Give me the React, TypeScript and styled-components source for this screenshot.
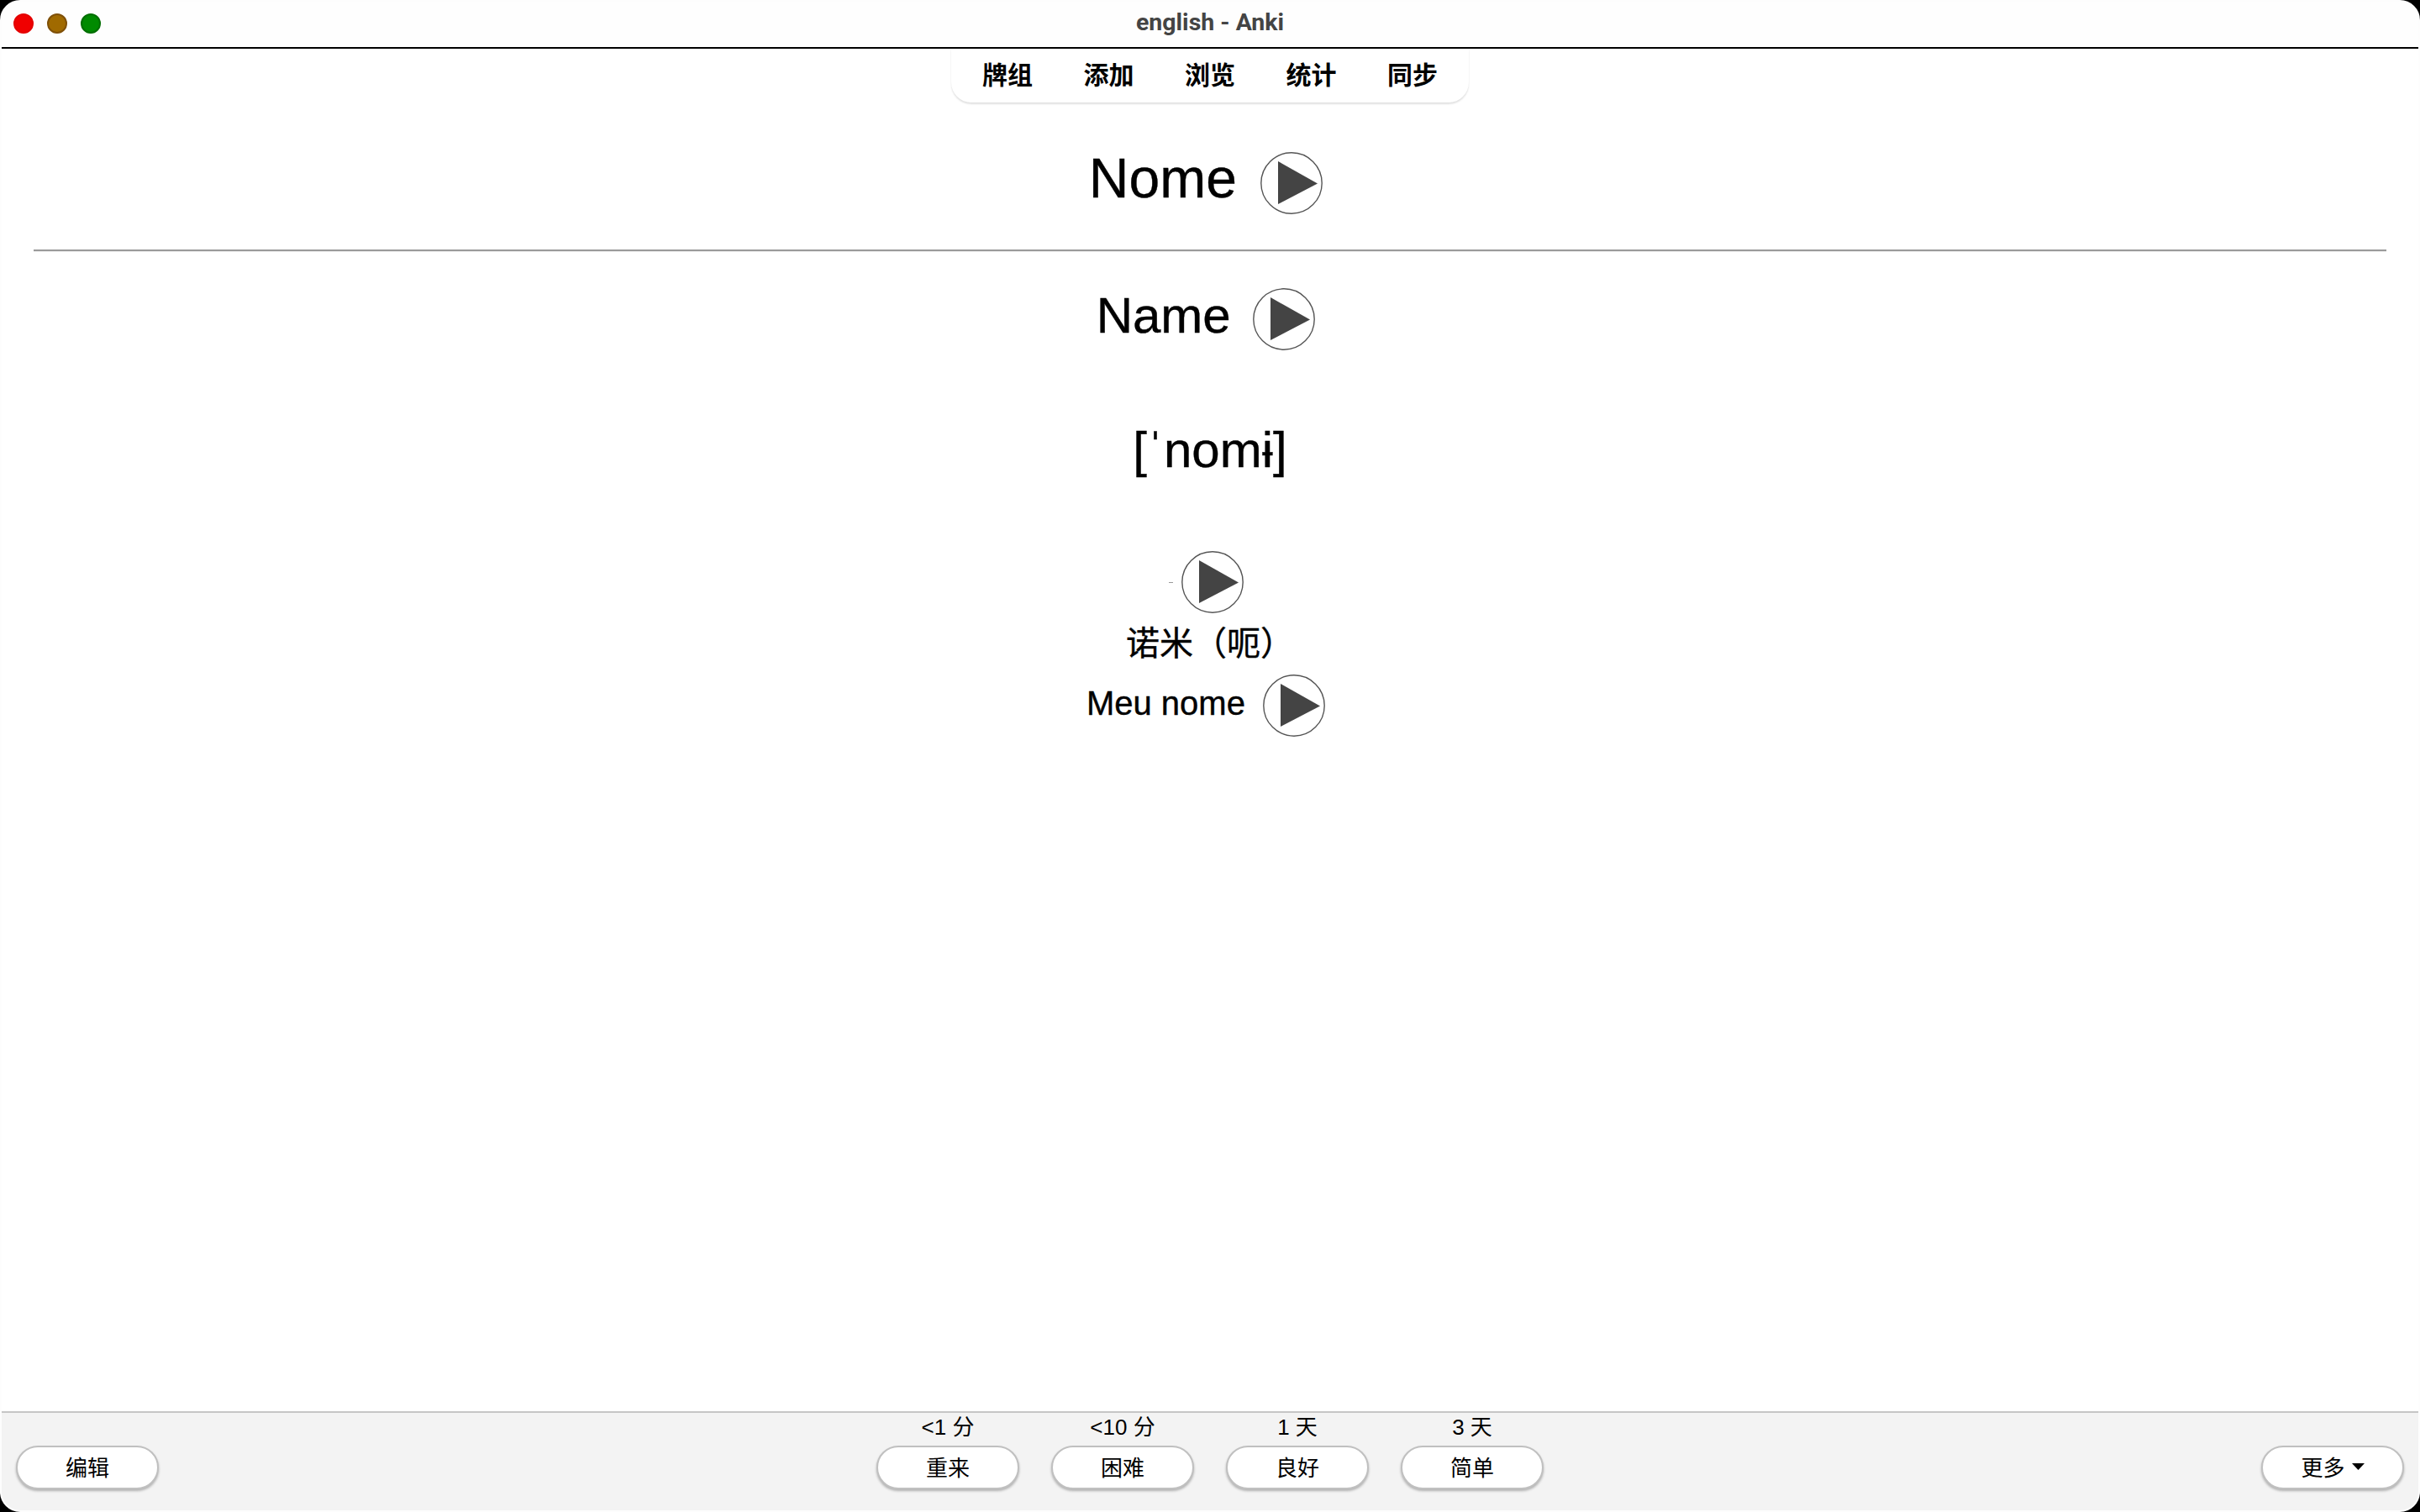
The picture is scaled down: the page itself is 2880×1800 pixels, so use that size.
import React from 'react'
import styled, { createGlobalStyle } from 'styled-components'

const sans = `"Liberation Sans", "Noto Sans CJK SC", sans-serif`

const GlobalStyle = createGlobalStyle`
  html, body {
    margin: 0;
    padding: 0;
    height: 100%;
    background: #000000;
    overflow: hidden;
  }
  #root {
    height: 100%;
  }
`

const Window = styled.div`
  box-sizing: border-box;
  width: 2880px;
  height: 1800px;
  display: flex;
  flex-direction: column;
  background: #ffffff;
  border: 2px solid #fdfdfd;
  border-radius: 24px;
  overflow: hidden;
  font-family: ${sans};
  color: #000000;
`

const TitleBar = styled.header`
  flex: none;
  box-sizing: border-box;
  height: 56px;
  display: grid;
  grid-template-columns: 1fr auto 1fr;
  align-items: center;
  padding: 0 14px 2px;
  background: #fefefe;
  border-bottom: 2px solid #000000;
`

const Lights = styled.div`
  display: flex;
  gap: 16px;
`

const Light = styled.span<{ $fill: string; $ring: string }>`
  box-sizing: border-box;
  width: 24px;
  height: 24px;
  border-radius: 50%;
  background: ${({ $fill }) => $fill};
  border: 2px solid ${({ $ring }) => $ring};
`

const Title = styled.div`
  font-family: Roboto, sans-serif;
  font-size: 28.5px;
  font-weight: 700;
  line-height: 30px;
  margin-bottom: 2px;
  color: #444444;
`

const Main = styled.main`
  flex: 1;
  display: flex;
  flex-direction: column;
  min-height: 0;
`

const Nav = styled.nav`
  flex: none;
  align-self: center;
  height: 64px;
  display: flex;
  align-items: center;
  padding: 0 7px;
  background: #ffffff;
  border-radius: 0 0 24px 24px;
  box-shadow: 0 2px 2px rgba(0, 0, 0, 0.12);
`

const NavItem = styled.a`
  width: 120.5px;
  text-align: center;
  font-size: 30px;
  font-weight: 700;
  line-height: 40px;
`

const Card = styled.section`
  flex: 1;
  display: flex;
  flex-direction: column;
  padding: 49px 38px 0;
  text-align: center;
  -webkit-text-stroke: 0.4px #000000;
`

const Line = styled.div<{ $size: number; $top?: number }>`
  font-size: ${({ $size }) => $size}px;
  line-height: 1;
  margin-top: ${({ $top }) => $top ?? 0}px;
`

const Rule = styled.hr`
  box-sizing: border-box;
  width: 100%;
  height: 3px;
  margin: 32px 0 33px;
  border: 0;
  border-top: 2px solid #9a9a9a;
  border-bottom: 1px solid #ececec;
`

const Tick = styled.span`
  display: inline-block;
  width: 5px;
  height: 1px;
  vertical-align: middle;
  background: #999999;
`

const PlayButton = styled.a`
  display: inline-flex;
  vertical-align: middle;
  margin: 10px;
`

const Play = () => (
  <PlayButton>
    <svg width="74" height="74" viewBox="0 0 74 74">
      <circle cx="37" cy="37" r="36.2" fill="#ffffff" stroke="#555555" strokeWidth="1.4" />
      <polygon points="21,11 68,37.5 21,62" fill="#444444" stroke="none" />
    </svg>
  </PlayButton>
)

const Footer = styled.footer`
  flex: none;
  box-sizing: border-box;
  height: 118px;
  display: grid;
  grid-template-columns: 1fr auto 1fr;
  align-items: end;
  padding: 0 17px 27px;
  background: #f3f3f3;
  border-top: 2px solid #c6c6c6;
`

const Answers = styled.div`
  display: flex;
  gap: 38px;
`

const Answer = styled.div`
  display: flex;
  flex-direction: column;
  align-items: center;
`

const Due = styled.span`
  font-size: 26px;
  line-height: 34px;
  margin-bottom: 5px;
`

const Button = styled.button<{ $end?: boolean }>`
  box-sizing: border-box;
  width: 170px;
  height: 52px;
  display: flex;
  align-items: center;
  justify-content: center;
  gap: 8px;
  justify-self: ${({ $end }) => ($end ? 'end' : 'start')};
  padding: 0 0 3px;
  background: #ffffff;
  border: 2px solid #c0c0c0;
  border-radius: 26px;
  box-shadow: 0 2px 3px rgba(0, 0, 0, 0.28);
  font-family: ${sans};
  font-size: 26px;
  color: #000000;
`

const answers = [
  { due: '<1 分', label: '重来' },
  { due: '<10 分', label: '困难' },
  { due: '1 天', label: '良好' },
  { due: '3 天', label: '简单' },
]

const navItems = ['牌组', '添加', '浏览', '统计', '同步']

export default function App() {
  return (
    <Window>
      <GlobalStyle />
      <TitleBar>
        <Lights>
          <Light $fill="#f00000" $ring="#e40000" />
          <Light $fill="#a06a00" $ring="#7f5008" />
          <Light $fill="#008a00" $ring="#006e00" />
        </Lights>
        <Title>english - Anki</Title>
      </TitleBar>
      <Main>
        <Nav>
          {navItems.map(item => (
            <NavItem key={item}>{item}</NavItem>
          ))}
        </Nav>
        <Card>
          <Line $size={66}>
            Nome <Play />
          </Line>
          <Rule />
          <Line $size={60}>
            Name <Play />
          </Line>
          <Line $size={60} $top={79}>[ˈnomɨ]</Line>
          <Line $size={40} $top={80}>
            <Tick />
            <Play />
          </Line>
          <Line $size={40} $top={6}>诺米（呃）</Line>
          <Line $size={40} $top={7}>
            Meu nome <Play />
          </Line>
        </Card>
      </Main>
      <Footer>
        <Button>编辑</Button>
        <Answers>
          {answers.map(answer => (
            <Answer key={answer.label}>
              <Due>{answer.due}</Due>
              <Button>{answer.label}</Button>
            </Answer>
          ))}
        </Answers>
        <Button $end>
          更多
          <svg width="15" height="8" viewBox="0 0 15 8">
            <polygon points="0,0 15,0 7.5,8" fill="#000000" />
          </svg>
        </Button>
      </Footer>
    </Window>
  )
}
